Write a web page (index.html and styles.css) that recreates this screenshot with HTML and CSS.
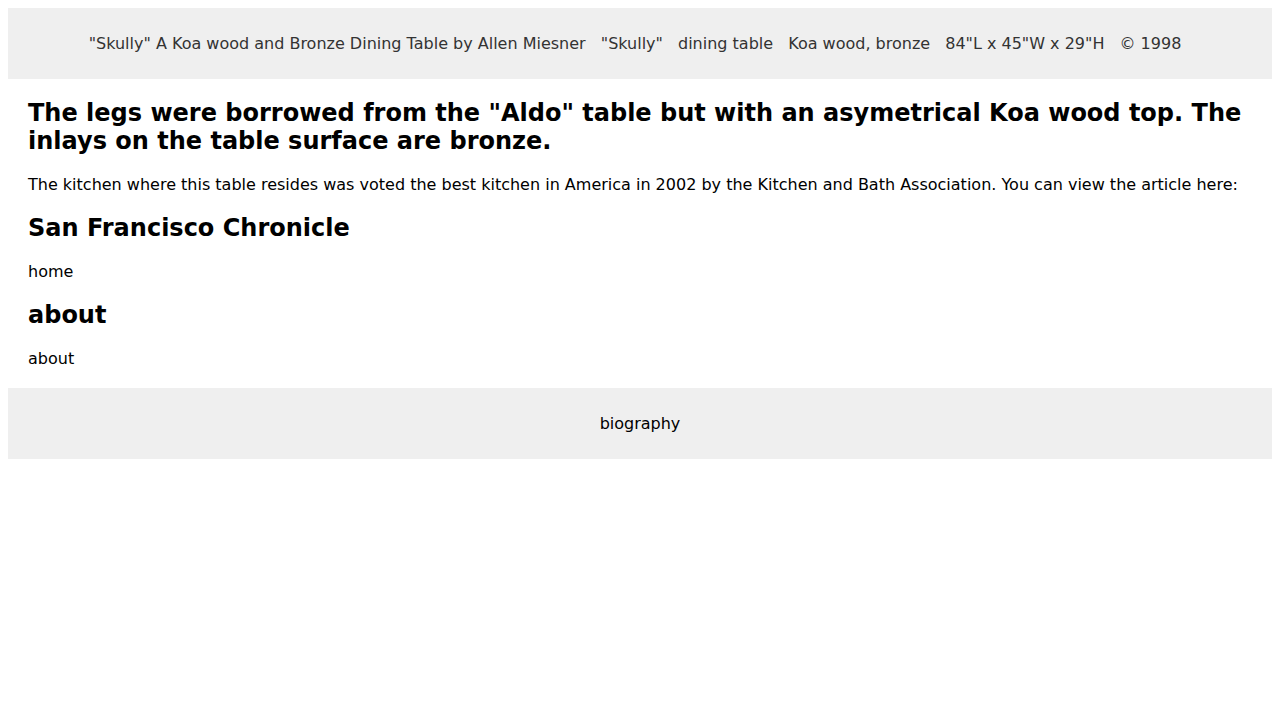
FILE: index.html
```html
<!DOCTYPE html>
<html lang="en">
<head>
<meta charset="utf-8">
<title>"Skully" Dining Table by Allen Miesner</title>
<link rel="stylesheet" href="styles.css">
</head>
<body>
<header class="site-header">
  <span class="meta-item">"Skully" A Koa wood and Bronze Dining Table by Allen Miesner</span>
  <span class="meta-item">"Skully"</span>
  <span class="meta-item">dining table</span>
  <span class="meta-item">Koa wood, bronze</span>
  <span class="meta-item">84"L x 45"W x 29"H</span>
  <span class="meta-item">© 1998</span>
</header>
<main class="content">
  <h2 class="heading">The legs were borrowed from the "Aldo" table but with an asymetrical Koa wood top. The inlays on the table surface are bronze.</h2>
  <p class="text">The kitchen where this table resides was voted the best kitchen in America in 2002 by the Kitchen and Bath Association. You can view the article here:</p>
  <h2 class="heading">San Francisco Chronicle</h2>
  <p class="text">home</p>
  <h2 class="heading">about</h2>
  <p class="text">about</p>
</main>
<footer class="site-footer">
  <span class="footer-item">biography</span>
</footer>
</body>
</html>
```
FILE: styles.css
```css
body {
  margin: 8px;
  font-family: "DejaVu Sans", sans-serif;
  font-size: 16px;
  color: #000;
  background: #fff;
}

.site-header {
  background: #efefef;
  color: #333;
  text-align: center;
  padding: 24px 0;
  line-height: 23px;
}

.meta-item {
  margin-right: 10px;
}

.content {
  padding: 0 20px 4px;
  overflow: hidden;
}

.heading {
  font-size: 24px;
  font-weight: bold;
  margin: 20px 0;
}

.text {
  margin: 16px 0;
}

.site-footer {
  background: #efefef;
  text-align: center;
  padding: 24px 0;
  line-height: 23px;
}
```
